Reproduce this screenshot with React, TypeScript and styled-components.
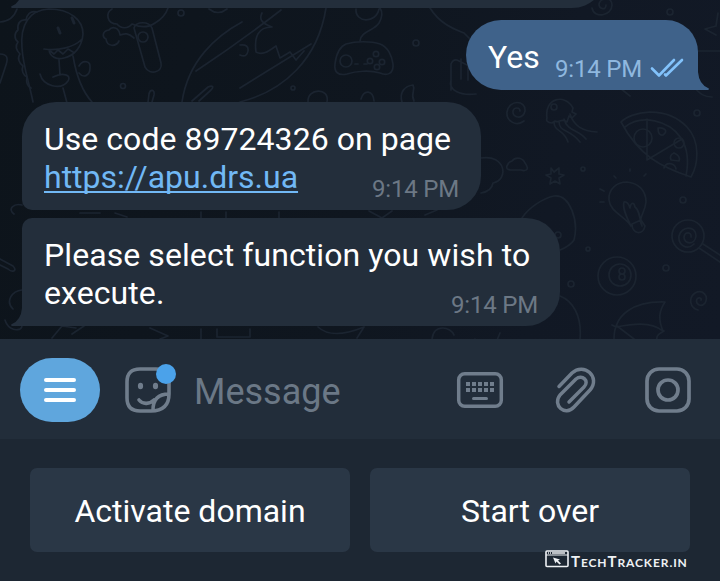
import React from "react";
import styled, { createGlobalStyle, css } from "styled-components";

const GlobalStyle = createGlobalStyle`
  html, body { margin: 0; padding: 0; background: #1d2733; }
  *, *::before, *::after { box-sizing: border-box; }
`;

const Screen = styled.main`
  display: flex;
  flex-direction: column;
  width: 720px;
  height: 581px;
  overflow: hidden;
  font-family: Roboto, "Liberation Sans", sans-serif;
  color: #fff;
`;

const Chat = styled.section`
  position: relative;
  display: flex;
  flex-direction: column;
  align-items: flex-start;
  height: 339px;
  padding: 0 22px;
  overflow: hidden;
  background: linear-gradient(100deg, #0d141b 0%, #0f161f 50%, #111824 75%, #121926 100%);
`;

const Wallpaper = styled.svg`
  position: absolute;
  inset: 0;
  fill: none;
  stroke: #1b2430;
  stroke-width: 1.7;
  stroke-linecap: round;
  stroke-linejoin: round;
`;

const Bubble = styled.article<{ $width: number; $height: number; $radius: string; $gap: number; $out?: boolean }>`
  position: relative;
  flex: none;
  width: ${(p) => p.$width}px;
  height: ${(p) => p.$height}px;
  margin-top: ${(p) => p.$gap}px;
  border-radius: ${(p) => p.$radius};
  padding: 18px 22px 0;
  background: #232e3b;
  ${(p) =>
    p.$out &&
    css`
      align-self: flex-end;
      display: flex;
      align-items: flex-start;
      padding: 18px 14px 0 22px;
      background: #3f628a;
    `}
`;

const Tail = styled.svg<{ $side: "left" | "right" }>`
  position: absolute;
  bottom: 0;
  ${(p) => p.$side}: -11px;
  fill: ${(p) => (p.$side === "left" ? "#232e3b" : "#3f628a")};
`;

const Body = styled.p<{ $spacing?: number }>`
  margin: 0;
  font-size: 32px;
  line-height: 38px;
  letter-spacing: ${(p) => p.$spacing ?? 0}px;
  white-space: nowrap;
`;

const LastLine = styled.div`
  display: flex;
  justify-content: space-between;
  align-items: flex-start;
`;

const Link = styled.a`
  color: #71b8f5;
  text-decoration: underline;
  text-decoration-thickness: 2px;
  text-underline-offset: 3px;
  text-decoration-skip-ink: none;
`;

const Time = styled.time<{ $out?: boolean }>`
  font-size: 24px;
  line-height: 28px;
  letter-spacing: -0.2px;
  white-space: nowrap;
  color: ${(p) => (p.$out ? "#8fb8df" : "#6c7885")};
  margin-top: 17px;
  ${(p) =>
    p.$out &&
    css`
      margin-left: auto;
    `}
`;

const Checks = styled.svg`
  margin: 20px 0 0 8px;
  fill: none;
  stroke: #82c2fb;
  stroke-width: 2.6;
  stroke-linecap: round;
  stroke-linejoin: round;
`;

const Composer = styled.form`
  display: flex;
  align-items: center;
  height: 100px;
  padding: 1px 29px 0 20px;
  background: #222d3a;
`;

const MenuButton = styled.button`
  display: flex;
  flex-direction: column;
  align-items: center;
  justify-content: center;
  gap: 6px;
  width: 80px;
  height: 64px;
  padding: 0;
  border: 0;
  border-radius: 32px;
  background: #5fa6dd;
`;

const MenuLine = styled.span`
  width: 32px;
  height: 4px;
  border-radius: 2px;
  background: #fff;
`;

const IconButton = styled.button<{ $gap: number }>`
  display: flex;
  margin: 0 0 0 ${(p) => p.$gap}px;
  padding: 0;
  border: 0;
  background: none;
  color: #707d8c;
`;

const Glyph = styled.svg`
  display: block;
  overflow: visible;
  fill: none;
  stroke: currentColor;
  stroke-width: 4;
  stroke-linecap: round;
  stroke-linejoin: round;
`;

const Placeholder = styled.span`
  flex: 1;
  margin-left: 23px;
  padding-top: 5px;
  font-size: 36px;
  line-height: 40px;
  color: #6b7886;
`;

const Keyboard = styled.section`
  position: relative;
  display: grid;
  grid-template-columns: 1fr 1fr;
  gap: 20px;
  height: 142px;
  padding: 29px 30px;
  background: #1d2733;
`;

const Key = styled.button`
  height: 84px;
  padding: 2px 0 0;
  border: 0;
  border-radius: 7px;
  background: #2a3746;
  color: #fff;
  font: 400 32px/38px Roboto, "Liberation Sans", sans-serif;
`;

const Watermark = styled.div`
  position: absolute;
  left: 545px;
  top: 111px;
  display: flex;
  gap: 2px;
  color: #eef1f4;
`;

const Brand = styled.span`
  padding-top: 4px;
  font: 700 12px/14px Lato, sans-serif;
  letter-spacing: 0.9px;
  text-transform: uppercase;
  white-space: nowrap;
`;

const Initial = styled.span`
  font-size: 15px;
`;

const Doodles = () => (
  <Wallpaper width="720" height="339" viewBox="0 0 720 339">
    {/* dinosaur */}
    <path d="M33 102C29 82 23 66 22 48C20 25 29 10 49 9C70 9 83 20 83 34C82 47 74 56 64 58C57 60 50 57 49 50M44 49C59 51 74 47 81 40M49 50l5 4 4-4 5 4 5-5 5 3M59 60L60 75M40 74C43 86 61 91 68 81C72 75 63 72 53 77M73 56C76 74 82 91 92 102M63 88l4 15M79 66C83 59 91 61 90 68C90 75 84 79 79 73" />
    <path d="M37 12c-7-2-10 3-11 8c-6-1-9 4-8 10c-4 3-4 9 0 12c-3 4-2 8 2 12c-3 4-1 9 3 12c-2 4 0 9 4 11c-1 5 0 9 4 11" />
    <path d="M58 28l2 5M72 18l2 5" strokeWidth="3" />
    {/* bone, pocket tool and feather */}
    <path d="M112 9c-7 4-5 15 5 15c4 5 11 5 15 0c9 4 16 4 23-1c7-4 11-9 13-15M134 28c2-7 15-7 18 0l9 35c2 9-11 13-16 4zM134 38c-7-6-10-4-14-3c-1-8-8-9-11-5c-7 1-7 7-3 9c1 8 10 8 13 2" />
    <circle cx="143" cy="37" r="5" />
    <circle cx="181" cy="13" r="3" />
    <circle cx="123" cy="86" r="2.5" />
    <path d="M148 102l1-8c1-5 6-5 5 1l-2 7M0 22q13-1 17-13M0 54c8 0 8 5 6 11L0 83M209 9q9 7 18 0" />
    {/* planet with its ring */}
    <path d="M182 102C188 61 216 36 242 22M196 71C226 51 254 31 281 10M240 88L311 44M326 8C318 59 284 91 240 102M192 101l16-14c5-2 6 0 3 3l-12 11M262 13c-3 6-1 10 10 14c-14 0-18 10-16 25c7 4 14-2 20-6l4 12 10-6 6 8 8-9M240 45q9-1 8 6t-8 4" />
    {/* gamepad */}
    <path d="M346 44C356 41 371 41 380 44C388 47 392 56 393 64C394 74 387 76 380 73C370 70 356 71 347 74C338 76 334 72 335 64C336 55 339 47 346 44ZM355 64h3m6 0h3" />
    <path d="M360 41c1-10 14-10 19-18c4-7 3-12 1-15M356 9c-1 14 20 15 23 0" />
    <circle cx="346" cy="61" r="6" />
    <circle cx="376" cy="54" r="2.7" /><circle cx="370" cy="61" r="2.7" /><circle cx="382" cy="62" r="2.7" /><circle cx="377" cy="67" r="2.7" />
    <circle cx="416" cy="43" r="3" /><circle cx="293" cy="88" r="2" />
    <path d="M308 102c-1-14 22-15 19 0M361 99c3-10 12-9 13 2M402 102c-3-10 3-16 11-17c3 6-3 8 1 16M430 8c10 16 24 21 34 25l8 8M451 90V64q2-5 6-4l10 5M451 80c-3 10 9 16 25 14M461 59v20m7-19v20" />
    {/* top right squiggles */}
    <path d="M592 8c2 11 20 8 20-3c0-9-12-7-13-1c0 5 7 7 7 1M718 13l-2 13-11 3 11 6M698 51h22M694 87c6 7 10 10 18 10M620 88l10 8" />
    <circle cx="670" cy="12" r="3" />
    {/* spiral and jellyfish */}
    <path d="M524 121c-8 6-18 0-17-9c2-13 19-12 18-1c-2 9-13 7-12 0c1-4 7-4 7 0M547 118c-3-20 18-25 26-10l-1 4 4 2-4 4-3-2-2 6c-6-5-8 2-12-1l-3 2c-5 0-6-3-5-5M554 122c0 10 10 7 14 20M559 121c0 12 10 7 21 21M564 119c3 12 15 11 22 20M570 114c4 12 12 17 27 18" />
    <circle cx="554" cy="107" r="3" />
    {/* pizza slice */}
    <path d="M621 122c9-10 44-18 66 5c14 15 11 38 4 50c-30-10-52-21-70-55zM625 127c16-13 44-7 56 11c7 11 8 23 5 38M647 119v41l35-21" />
    <circle cx="643" cy="138" r="9" /><circle cx="679" cy="143" r="5" />
    <path d="M658 128c6-1 11 3 5 7q-5 1-5-7M674 153q7 3 5 8l-8-1q-2-5 3-7M664 168c2-7 11-5 12 1" />
    <circle cx="697" cy="113" r="3" /><circle cx="583" cy="169" r="2" /><circle cx="683" cy="200" r="3" />
    {/* cloud, star, bulb */}
    <path d="M481 158c25-4 28 22 12 25c-1 6-6 9-12 10M511 170c-8 0-3-8 1-9c4-5 11-3 13 2c6 8-1 8-4 7zM551 168l3 4 5-4 0 6 5 1-5 3 1 6-5-3-5 3 1-6-5-3 5-1z" />
    <path d="M631 226C625 216 610 212 609 200C608 189 617 182 627 182C638 183 646 190 646 202C645 213 638 217 642 226M631 226C627 218 622 208 624 202C628 201 629 205 630 208C631 202 634 202 635 207C639 210 640 217 641 224M632 224l9-4 4 6c-2 10-13 8-13-2zM600 189l4 2M600 202h4M630 169v2M614 176l2 2M646 174l-2 2" />
    {/* balloon and egg */}
    <path d="M522 218c7-11 22-20 32-22c16-2 25 25 20 44q-4 6-14 10M560 296c13 5 22 20 20 43" />
    <circle cx="558" cy="235" r="3" /><circle cx="588" cy="249" r="2" /><circle cx="571" cy="284" r="3" />
    {/* billiard ball and lollipop */}
    <circle cx="617" cy="276" r="19" /><circle cx="620" cy="275" r="11" /><circle cx="622" cy="271" r="3" /><circle cx="622" cy="277" r="3" />
    <circle cx="688" cy="236" r="16" />
    <path d="M694 244c-7 7-16 1-15-8c2-10 17-11 17 0c-1 9-12 9-12 1c1-6 8-5 7 0M699 248l21 14M703 244l17 11M698 310c-8-2-10-12-3-17c8-4 14 3 10 10c-4 5-10 1-8-4c2-2 5-1 4 1" />
    <circle cx="666" cy="268" r="3" />
    {/* umbrella and edge details */}
    <path d="M614 339c0-25 20-38 51-37c-6 9-7 17-2 29c-13-10-31-7-47-4l-4-2M617 326l17 13M664 331c-4 2-8 5-7 8M318 327q14 13 46 0l-7 11M432 339c2-16 19-12 22-4M475 339q2 14 20 6l5-12M14 214c-7-5 0-11 8-9M0 259l13 7c5 5-1 7-5 3L0 265M13 309c-8-8-1-18 9-19M5 320c5 16 24 9 14 2M52 338l10-12 14 2M72 334l12-8M150 328l18 8-8 3M201 329v10m16-10v8h33v-8" />
    <path d="M80 213h20m15 0l12 4M201 212v7m25-7v7m53-7v7M369 211l13 7 10-7M425 215l12-5" />
  </Wallpaper>
);

export default function App() {
  return (
    <>
      <GlobalStyle />
      <Screen>
        <Chat>
          <Doodles />
          <Bubble $width={584} $height={108} $gap={-100} $radius="10px 34px 34px 0">
            <Tail $side="left" width="12" height="18" viewBox="0 0 12 18"><path d="M12 0V18H1Q-1 17 1 16Q10 12 11 0Z" /></Tail>
          </Bubble>
          <Bubble $out $width={232} $height={70} $gap={12} $radius="35px 32px 0 35px">
            <Body>Yes</Body>
            <Time $out>9:14 PM</Time>
            <Checks width="34" height="20" viewBox="0 0 34 20"><path d="M2 10.5l7 7L24 2M16 17.5L32 2M15 16.5l1 1" /></Checks>
            <Tail $side="right" width="12" height="18" viewBox="0 0 12 18"><path d="M0 0V18H11Q13 17 11 16Q2 12 1 0Z" /></Tail>
          </Bubble>
          <Bubble $width={459} $height={108} $gap={12} $radius="34px 34px 34px 10px">
            <Body $spacing={0.04}>Use code 89724326 on page</Body>
            <LastLine>
              <Body><Link>https://apu.drs.ua</Link></Body>
              <Time>9:14 PM</Time>
            </LastLine>
          </Bubble>
          <Bubble $width={538} $height={108} $gap={8} $radius="10px 34px 34px 0">
            <Body $spacing={0.08}>Please select function you wish to</Body>
            <LastLine>
              <Body $spacing={0.08}>execute.</Body>
              <Time>9:14 PM</Time>
            </LastLine>
            <Tail $side="left" width="12" height="18" viewBox="0 0 12 18"><path d="M12 0V18H1Q-1 17 1 16Q10 12 11 0Z" /></Tail>
          </Bubble>
        </Chat>
        <Composer>
          <MenuButton type="button" aria-label="Menu"><MenuLine /><MenuLine /><MenuLine /></MenuButton>
          <IconButton type="button" aria-label="Stickers" $gap={25}>
            <Glyph width="46" height="46" viewBox="0 0 46 46">
              <path d="M44 27V15Q44 2 31 2H15Q2 2 2 15V31Q2 44 15 44H26Q44 44 44 27ZM44 27C34 27 28 32 28 43M14 33C18 38 25 37 29 33" strokeWidth="3.6" />
              <ellipse cx="15.5" cy="19" rx="2.6" ry="3.2" fill="currentColor" stroke="none" />
              <ellipse cx="30.5" cy="19" rx="2.6" ry="3.2" fill="currentColor" stroke="none" />
              <circle cx="41" cy="7" r="10" fill="#4ba2ea" stroke="none" />
            </Glyph>
          </IconButton>
          <Placeholder>Message</Placeholder>
          <IconButton type="button" aria-label="Bot keyboard" $gap={0}>
            <Glyph width="46" height="36" viewBox="0 0 46 36">
              <rect x="1.7" y="1.7" width="42.6" height="32.6" rx="6" strokeWidth="3.5" />
              <path d="M9 12h28M9 18h28" strokeDasharray="4 2" strokeLinecap="butt" />
              <path d="M16.5 26.5h13" strokeWidth="3" />
            </Glyph>
          </IconButton>
          <IconButton type="button" aria-label="Attach" $gap={53}>
            <Glyph width="40" height="46" viewBox="0 0 40 46">
              <path d="M3 19.5L16 6C28-5 45 10 34 23L18 40C9 50-4 38 4 28L20 12C26 7 34 14 28 20L13 35" strokeWidth="3.5" />
            </Glyph>
          </IconButton>
          <IconButton type="button" aria-label="Camera" $gap={49}>
            <Glyph width="46" height="46" viewBox="0 0 46 46">
              <rect x="2" y="2" width="42" height="42" rx="12" strokeWidth="3.7" />
              <circle cx="23" cy="23" r="10" strokeWidth="3.7" />
            </Glyph>
          </IconButton>
        </Composer>
        <Keyboard>
          <Key>Activate domain</Key>
          <Key>Start over</Key>
          <Watermark>
            <svg width="24" height="18" viewBox="0 0 24 18" fill="none" stroke="currentColor">
              <rect x="1" y="1" width="22" height="15.5" rx="1" strokeWidth="1.6" />
              <path d="M1 5h22" strokeWidth="1" />
              <path d="M3 3h1M5 3h1M7 3h13" strokeWidth="1.4" />
              <path d="M8 7.5l7 2-2 1 3 3-1.5 1-3-3-1 2z" fill="currentColor" stroke="none" />
            </svg>
            <Brand><Initial>T</Initial>ech<Initial>T</Initial>racker.in</Brand>
          </Watermark>
        </Keyboard>
      </Screen>
    </>
  );
}
